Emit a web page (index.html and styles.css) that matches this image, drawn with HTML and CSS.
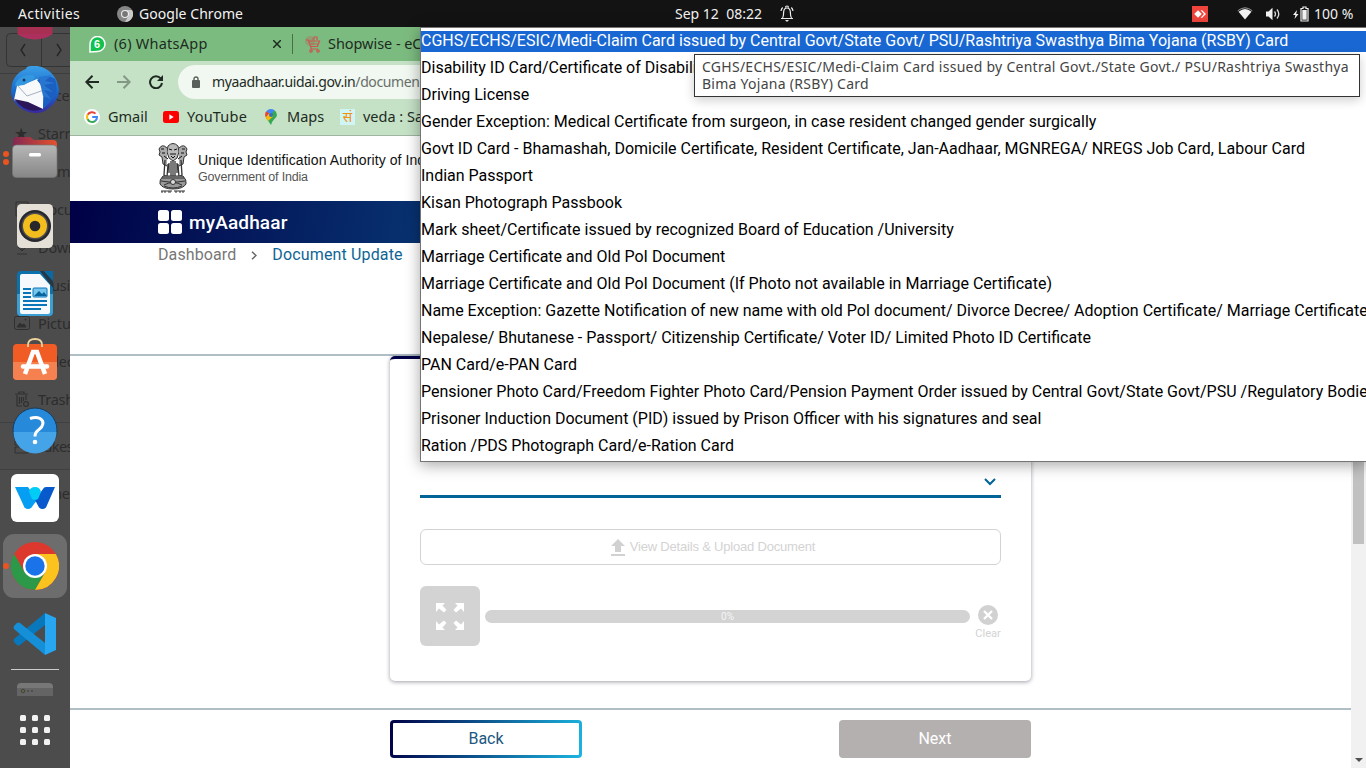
FILE: index.html
```html
<!DOCTYPE html>
<html lang="en">
<head>
<meta charset="utf-8">
<title>myAadhaar - Document Update</title>
<link rel="stylesheet" href="styles.css">
</head>
<body>
<header class="topbar">
  <span class="t-activities">Activities</span>
  <svg class="t-app-icon" width="16" height="16" viewBox="0 0 16 16"><circle cx="8" cy="8" r="8" fill="#858585"/><path d="M8 4h7A8 8 0 0 1 8 16l3.500-6Z" fill="#c9c9c9"/><circle cx="8" cy="8" r="4" fill="#eee"/><circle cx="8" cy="8" r="2.900" fill="#777"/></svg>
  <span class="t-app">Google Chrome</span>
  <span class="t-clock">Sep 12&nbsp; 08:22</span>
  <svg class="t-bell" width="14" height="17" viewBox="0 0 14 17" fill="none" stroke="#eee" stroke-width="1.200"><path d="M1 13.500h12M2.500 13c1.500-2 .8-4 1.200-6.500C4 4 5 3 7 3s3 1 3.300 3.500c.4 2.500-.3 4.500 1.200 6.500M5.500 2.500a1.500 1.500 0 0 1 3 0M1 6c.2-1.500.8-2.500 1.700-3.500M13 6c-.2-1.500-.8-2.500-1.700-3.500"/><path d="M5 15h4l-2 2z" fill="#eee" stroke="none"/></svg>
  <svg class="t-anydesk" width="16" height="16" viewBox="0 0 16 16"><path fill="#ef443b" d="M0 0h16v16H0z"/><path fill="#fff" d="m6 4.200 3.800 3.800L6 11.800 2.200 8zM8.500 4.200h1.700L14 8l-3.800 3.800H8.500L12 8z"/></svg>
  <svg class="t-wifi" width="16" height="13" viewBox="0 0 16 13"><path d="M1.500 4.800Q8-1 14.500 4.800L8 12.500Z" fill="#f2f2f2"/><path d="M.7 3.800Q8-2.200 15.300 3.800" fill="none" stroke="#999"/></svg>
  <svg class="t-sound" width="16" height="14" viewBox="0 0 16 14"><path d="M1 4.500h2.500L7.500.8v12.400L3.500 9.500H1z" fill="#f2f2f2"/><path d="M9.500 4.500q2 2.500 0 5M12 2.500q3.600 4.500 0 9" fill="none" stroke="#ddd" stroke-width="1.300"/></svg>
  <svg class="t-battery" width="16" height="16" viewBox="0 0 16 16"><path d="m4 4-4 5h2.400L1.500 13l4-5H3.200z" fill="#f2f2f2"/><path d="M10 1h3v1.500h2V15H8V2.500h2z" fill="none" stroke="#f2f2f2" stroke-width="1.200"/><path d="M9.300 4h4.400v9.700H9.300z" fill="#f2f2f2"/></svg>
  <span class="t-percent">100 %</span>
</header>
<div class="desktop">
  <aside class="dock">
    <div class="ghost">
      <svg class="ghost-nav" width="64" height="34" fill="none" stroke="#343434"><rect x=".5" y=".5" width="72" height="33" rx="4"/><path d="M35.500 0v34"/><path d="m19 11-4 6 4 6M51 11l4 6-4 6" stroke="#252525" stroke-width="1.400"/></svg>
      <ul class="ghost-list">
        <li><i></i>Recent</li>
        <li><i>★</i>Starred</li>
        <li><i></i>Home</li>
        <li><i><svg width="16" height="16" fill="none" stroke="#303030"><path d="M2 1h12v14H2z"/></svg></i>Documents</li>
        <li><i><svg width="16" height="16" fill="none" stroke="#303030"><path d="M8 1v10M4 8l4 4 4-4M3 15h10"/></svg></i>Downloads</li>
        <li><i></i>Music</li>
        <li><i><svg width="16" height="14" fill="none" stroke="#303030"><rect x=".5" y=".5" width="15" height="13" rx="2"/><path d="m3 11 3-4 2 2 2-1 2 3zM11 3h1v1h-1z" fill="#303030"/></svg></i>Pictures</li>
        <li><i></i>Videos</li>
        <li><i><svg width="16" height="16" fill="none" stroke="#303030" stroke-width="1.200"><path d="M1 3h13M3 4v11h5M12 4v5M5 3V1h5v2M5.500 6v7M7.500 6v6M9.500 6v4"/><circle cx="12" cy="13" r="2.400"/></svg></i>Trash</li>
        <li class="ghost-disk"><i><svg width="16" height="16" fill="none" stroke="#303030"><path d="M1 1h13v6H1zM1 9h13v6H1z"/></svg></i>Takes</li>
        <li class="ghost-disk"><i></i>Other</li>
      </ul>
    </div>
    <nav class="launcher">
      <svg class="peek" width="48" height="16" viewBox="0 0 48 16"><path d="M6.500 7a22 14 0 0 0 35 0Z" fill="#ad2f5d"/><path d="M6.500 0h35v7h-35Z" fill="#a72f52"/></svg>
      <svg class="app" viewBox="0 0 48 48"><defs><linearGradient id="tb" x2="0" y2="1"><stop stop-color="#3ba0e8"/><stop offset=".55" stop-color="#1769ca"/><stop offset="1" stop-color="#3929a0"/></linearGradient></defs><path d="M1 18C4 8 10 5 15 3c0-2 2-3 5-3 14-2 27 9 28 24 0 7-4 14-10 18-3 3-8 5-14 5C10 46 0 36 0 25Z" fill="url(#tb)"/><path d="M3 34 6 20l8-2 12-5 7 3-1 27q-15-1-29-9Z" fill="#f8f9fb"/><path d="m6 19 10 11 17-6" fill="none" stroke="#a6b0bd"/><path d="m3 33 14 3 15 7q-17 6-29-10Z" fill="#2b165a"/><path d="M4 20Q6 10 17 9q8-1 6 4l-10 6Z" fill="#3398df"/><path d="M26 14Q38 8 44 13q3 6 0 18L32 43l1-20Z" fill="#1c5fc2"/><path d="m28 11 13-2-7 6 10 2-11 2 9 7-9-2 7 9-8-3-3-13Z" fill="#2776cf"/><circle cx="13" cy="14" r="1.500" fill="#163964"/></svg>
      <svg class="app" viewBox="0 0 48 48"><defs><linearGradient id="fd"><stop stop-color="#832853"/><stop offset="1" stop-color="#e6512b"/></linearGradient><linearGradient id="fg" x2="0" y2="1"><stop stop-color="#b7b7b7"/><stop offset="1" stop-color="#868686"/></linearGradient></defs><path d="M2 7q0-4 4-4h13l4 3h19q4 0 4 4v27H2Z" fill="url(#fd)"/><rect x="1.500" y="11" width="44.500" height="32.500" rx="4" fill="url(#fg)" stroke="#777" stroke-width=".7"/><rect x="18" y="19" width="12" height="3.500" rx="1.500" fill="#fff"/></svg>
      <svg class="app" viewBox="0 0 48 48"><rect x="6" y="2" width="36" height="44" rx="4.500" fill="#e5e0d7"/><circle cx="24" cy="24" r="16" fill="#27272d"/><circle cx="24" cy="24" r="13.500" fill="#4b4b50"/><circle cx="24" cy="24" r="12" fill="#f3bd1e"/><circle cx="24" cy="24" r="5.300" fill="#28282c"/></svg>
      <svg class="app" viewBox="0 0 48 48"><path d="M10 1h32v41q0 4-4 4H10q-4 0-4-4V5q0-4 4-4Z" fill="#0c70aa"/><path d="M6 24h36v18q0 4-4 4H10q-4 0-4-4Z" fill="#3b9fd4"/><path d="M11 4h18l10 11v27q0 2-2 2H11q-2 0-2-2V6q0-2 2-2Z" fill="#f5f9fb"/><path d="M29 1h4l9 10v7Z" fill="#243744"/><path d="M33 1h9v10Z" fill="#0b68a2"/><path d="M12 19h8m-8 4h8m-8 4h8m-8 4h24m-24 4h24m-24 4h18" stroke="#0876b9" stroke-width="1.800"/><rect x="22" y="18" width="14" height="9" rx="1" fill="#75c5ed" stroke="#0876b9"/><path d="m23 26 5-5 3 3 2-2 3 4Z" fill="#07639b"/></svg>
      <svg class="app" viewBox="0 0 48 48"><rect x="2" y="6" width="44" height="36" rx="4" fill="#f15c25"/><path d="M2 24h44v14q0 4-4 4H6q-4 0-4-4Z" fill="#f58151"/><path d="m14 36 8-22h4l8 22" fill="none" stroke="#fff" stroke-width="4.500"/><path d="M12 28.500h24" stroke="#fff" stroke-width="4.500" stroke-linecap="round"/><path d="M17 9V7q0-6 7-6t7 6v2" fill="none" stroke="#f0d29e" stroke-width="1.800"/></svg>
      <svg class="app help" viewBox="0 0 48 48"><circle cx="24" cy="24" r="22" fill="#2789da" stroke="#173b59"/><path d="M2.500 26h43a21.500 21.500 0 0 1-43 0Z" fill="#45a3e7"/><path d="M19 12.500q6-2 10 0c5 3 3 8-1 11-3 2-4 4-4 7" fill="none" stroke="#fff" stroke-width="3"/><circle cx="24" cy="36" r="2.300" fill="#fff"/></svg>
      <svg class="app" viewBox="0 0 48 48"><rect width="48" height="48" rx="6" fill="#fff"/><path d="M4 13h13l9 13-5.500 7.500q-3.500 3-7 0Z" fill="#059ef2"/><path d="M44 13h-9q-2 0-3 2l-8 11 4 7.500q3.500 3 7 0Z" fill="#0759cc"/><path d="M18 18q1-5 6-5t6 5l-3 7q-3 2-6 0Z" fill="#00ccf5"/></svg>
      <div class="active-app"><svg class="app" viewBox="0 0 48 48"><circle cx="24" cy="24" r="24" fill="#dc382e"/><path d="M3.200 12A24 24 0 0 0 24 48l10.400-18H13.600Z" fill="#2b9947"/><path d="M44.800 12A24 24 0 0 1 24 48l10.400-18L24 12Z" fill="#fcc21d"/><circle cx="24" cy="24" r="12" fill="#fff"/><circle cx="24" cy="24" r="9.700" fill="#1a73e8"/></svg></div>
      <svg class="app" viewBox="0 0 48 48"><path d="M34 3v12L9 35q-2 1-3 0l-3-3q-1-2 0-3Z" fill="#0877bc"/><path d="M34 45V33L9 13q-2-1-3 0l-3 3q-1 2 0 3Z" fill="#158fd7"/><path d="m34 3 11 5v32l-11 5Z" fill="#27a7f2"/></svg>
      <div class="dock-rule"></div>
      <svg class="drive" width="36" height="13"><path d="M0 13V4q0-4 4-4h28q4 0 4 4v9Z" fill="#777"/><path d="M0 5h36v8H0Z" fill="#646464"/><circle cx="6" cy="8" r="1.800" fill="#66663c" stroke="#424242"/><circle cx="11" cy="8" r="1" fill="#484848"/><circle cx="15" cy="8" r="1" fill="#484848"/></svg>
      <div class="grid-icon"><b></b><b></b><b></b><b></b><b></b><b></b><b></b><b></b><b></b></div>
    </nav>
    <i class="dot d1"></i><i class="dot d2"></i><i class="dot d3"></i>
  </aside>
  <main class="browser">
    <div class="tabs">
      <svg width="17" height="17" viewBox="0 0 17 17"><path d="M1 16V8a7.500 7.500 0 1 1 7.500 7.500Z" fill="#12c24e" stroke="#fff" stroke-width="1.500"/></svg><span class="wa-count">6</span>
      <span class="tab-title wa-title">(6) WhatsApp</span>
      <svg class="tab-close" width="8" height="8"><path d="m0 0 8 8M8 0 0 8" stroke="#1c2c1d" stroke-width="1.500"/></svg>
      <i class="tab-sep"></i>
      <svg class="cart" width="16" height="17" fill="none" stroke="#cc5551" stroke-width="1.200"><circle cx="5" cy="5" r="5" fill="#b36a5b" opacity=".35" stroke="none"/><path d="M1 4h2.500l2 6.500h7L14.500 5H4M6 8h7.500M6 10.500V13h7M7 3h2V1h3v3"/><circle cx="6" cy="15" r="1.200"/><circle cx="13" cy="15" r="1.200"/></svg>
      <span class="tab-title shop-title">Shopwise - eC</span>
    </div>
    <div class="toolbar">
      <svg class="nav-back" width="14" height="14" fill="none" stroke="#1f2b22" stroke-width="2"><path d="M14 7H1.500M7.500.8 1.300 7l6.200 6.200"/></svg>
      <svg class="nav-fwd" width="14" height="14" fill="none" stroke="#839785" stroke-width="2"><path d="M0 7h12.500M6.500.8 12.700 7l-6.200 6.200"/></svg>
      <svg class="nav-reload" width="14" height="14" fill="none" stroke="#1f2b22" stroke-width="2"><path d="M11.800 3.500A6 6 0 1 0 13 8"/><path d="M14 0v6H8Z" fill="#1f2b22" stroke="none"/></svg>
      <div class="omnibox">
        <svg width="8" height="12"><path d="M2 5V3a2 2 0 0 1 4 0v2" fill="none" stroke="#59605b" stroke-width="1.400"/><rect y="4" width="8" height="8" rx="1" fill="#59605b"/></svg>
        <span class="url">myaadhaar.uidai.gov.in<em>/documen</em></span>
      </div>
    </div>
    <div class="bookmarks">
      <svg width="16" height="16" viewBox="0 0 16 16"><circle cx="8" cy="8" r="8" fill="#fff"/><g fill="none" stroke-width="2"><path d="M11.500 4.600A5 5 0 0 0 3.600 5.800" stroke="#ea4335"/><path d="M3.600 5.600a5 5 0 0 0 0 4.800" stroke="#fbbc05"/><path d="M3.600 10.200a5 5 0 0 0 7.800 1.500" stroke="#34a853"/><path d="M8.200 8H13q0 2.500-1.700 3.800" stroke="#4285f4"/></g></svg>
      <span class="bm gmail">Gmail</span>
      <svg width="16" height="12"><rect width="16" height="12" rx="2.500" fill="#f00"/><path d="m6.300 3.300 4.400 2.700-4.400 2.700Z" fill="#fff"/></svg>
      <span class="bm yt">YouTube</span>
      <svg width="12" height="16" viewBox="0 0 12 16"><path d="M.8 8.500 6 16q.5-3 3-5.500Q12 8 12 6 12 3 9.500 1.200Z" fill="#34a853"/><path d="M1.300 2.300Q-.8 5 .8 8.500L5 4Z" fill="#ea4335"/><path d="M1.300 2.300Q5-1.500 9.500 1.200L5.500 6Z" fill="#4285f4"/><path d="M.8 8.500 4.500 4 8 7.500 3 12Z" fill="#fbbc04"/><circle cx="6" cy="6" r="2" fill="#356fc0"/></svg>
      <span class="bm maps">Maps</span>
      <span class="veda-icon">सं</span>
      <span class="bm veda">veda : Sa</span>
    </div>
    <div class="page">
      <div class="viewport">
        <div class="gov">
          <svg width="30" height="51" viewBox="0 0 30 51" fill="none" stroke="#333" stroke-width="1"><path d="M10 3q5-5 10 0l1 6-2 6-4 3-4-3-2-6Z" fill="#bbb"/><path d="M9 5Q4 0 1 6l1 3-1 3 3 2 1 7 4 2M21 5q5-5 8 1l-1 3 1 3-3 2-1 7-4 2" fill="#aaa"/><path d="m11 6 3 1m2 0 3-1m-7 5h6m-5 2 2 2 2-2M3 6h3m18 0h3M4 10h3m16 0h3M6 13l4 3m14-3-4 3" stroke="#111"/><path d="m7 17-1 15 3 2 1-13m3-3v16m4-16v16m3-13 1 13 3-2-1-15M15 18v15M11 20v10M19 20v10" stroke-width="1.300"/><path d="M5 33h20q4 4 3 8-3 5-13 5T2 41q-1-4 3-8Z" fill="#999"/><path d="M4 35h22M3 38q12 3 24 0M6 42q9-5 18 0M6 43q9 4 18 0"/><circle cx="15" cy="39" r="2.500" fill="#ddd"/><path d="M3 48h11m2 0h11M4 48v2m3-2v2m3-1h3m5-1v2m4-2v2m3-2v2"/></svg>
          <div><div class="gov-name">Unique Identification Authority of Ind</div><div class="gov-sub">Government of India</div></div>
        </div>
        <div class="brand"><div class="brand-grid"><b></b><b></b><b></b><b></b></div><strong>myAadhaar</strong></div>
        <div class="crumbs"><span>Dashboard</span><svg width="6" height="9" fill="none" stroke="#666" stroke-width="1.500"><path d="m1 .8 4 3.700-4 3.700"/></svg><a>Document Update</a></div>
        <section class="content">
          <div class="card">
            <div class="select"><svg width="12" height="8" fill="none" stroke="#006496" stroke-width="2"><path d="m1 1 5 5 5-5"/></svg></div>
            <div class="upload"><svg width="14" height="17"><path d="m7 0 7 7h-4v6H4V7H0ZM0 15h14v2H0Z" fill="#d1d1d1"/></svg><span>View Details &amp; Upload Document</span></div>
            <div class="progress-row">
              <div class="expand"><svg width="28" height="27" viewBox="0 0 28 27" fill="#fff"><path d="M0 0h9L6.500 2.500 10.500 7 8 9.500 3 5.500 0 9Z"/><path d="M28 0h-9l2.500 2.500-4 4.500L20 9.500l5-4L28 9ZM0 27h9l-2.500-2.500 4-4.500L8 17.500l-5 4L0 18ZM28 27h-9l2.500-2.500-4-4.500 2.500-2.500 5 4 3-3.500Z"/></svg></div>
              <div class="progress">0%</div>
              <div class="clear"><svg width="20" height="20"><circle cx="10" cy="10" r="10" fill="#d1d1d1"/><path d="m6 6 8 8m0-8-8 8" stroke="#fff" stroke-width="2.300"/></svg><span>Clear</span></div>
            </div>
          </div>
        </section>
        <footer class="actions"><button class="back">Back</button><button class="next">Next</button></footer>
      </div>
      <div class="scroll"><div class="thumb"></div><svg width="8" height="4"><path d="M0 0h8L4 4Z" fill="#505050"/></svg></div>
    </div>
  </main>
</div>
<ul class="options">
  <li class="selected"><span>CGHS/ECHS/ESIC/Medi-Claim Card issued by Central Govt/State Govt/ PSU/Rashtriya Swasthya Bima Yojana (RSBY) Card</span></li>
  <li>Disability ID Card/Certificate of Disabili</li>
  <li>Driving License</li>
  <li>Gender Exception: Medical Certificate from surgeon, in case resident changed gender surgically</li>
  <li>Govt ID Card - Bhamashah, Domicile Certificate, Resident Certificate, Jan-Aadhaar, MGNREGA/ NREGS Job Card, Labour Card</li>
  <li>Indian Passport</li>
  <li>Kisan Photograph Passbook</li>
  <li>Mark sheet/Certificate issued by recognized Board of Education /University</li>
  <li>Marriage Certificate and Old PoI Document</li>
  <li>Marriage Certificate and Old PoI Document (If Photo not available in Marriage Certificate)</li>
  <li>Name Exception: Gazette Notification of new name with old PoI document/ Divorce Decree/ Adoption Certificate/ Marriage Certificate</li>
  <li>Nepalese/ Bhutanese - Passport/ Citizenship Certificate/ Voter ID/ Limited Photo ID Certificate</li>
  <li>PAN Card/e-PAN Card</li>
  <li>Pensioner Photo Card/Freedom Fighter Photo Card/Pension Payment Order issued by Central Govt/State Govt/PSU /Regulatory Bodies</li>
  <li>Prisoner Induction Document (PID) issued by Prison Officer with his signatures and seal</li>
  <li>Ration /PDS Photograph Card/e-Ration Card</li>
</ul>
<div class="tooltip"><div class="tip1">CGHS/ECHS/ESIC/Medi-Claim Card issued by Central Govt./State Govt./ PSU/Rashtriya Swasthya</div><div class="tip2">Bima Yojana (RSBY) Card</div></div>
</body>
</html>
```
FILE: styles.css
```css
* { box-sizing: border-box; }
html, body { margin: 0; width: 1366px; height: 768px; overflow: hidden; }
body { position: relative; font-family: Roboto, "Liberation Sans", sans-serif; font-size: 16px; background: #fff; }
svg { display: block; flex: none; }
ul { list-style: none; margin: 0; padding: 0; }
i, em { font-style: normal; }

.topbar { display: flex; align-items: center; height: 27px; background: #131313; color: #f2f2f2; font: 14px "Noto Sans", sans-serif; white-space: nowrap; padding-left: 18px; }
.topbar span { padding-bottom: 1px; }
.t-activities { width: 99px; letter-spacing: .38px; }
.t-app { margin-left: 6px; width: 536px; letter-spacing: .05px; }
.t-clock { width: 105px; }
.t-bell { margin-right: 398px; }
.t-anydesk { margin-right: 29px; }
.t-wifi { margin-right: 12px; }
.t-sound { margin-right: 12px; }
.topbar .t-percent { margin-left: 5px; padding-bottom: 0; }

.desktop { display: grid; grid-template-columns: 70px 1fr; height: 741px; }
.dock { position: relative; background: #4c4c4c; overflow: hidden; }
.ghost { position: absolute; inset: 0; color: #2d2d2d; font: 14.500px "Noto Sans", sans-serif; }
.ghost-nav { margin: 6px 0 0 6px; }
.ghost-list { border-top: 1px solid #3d3d3d; margin-top: 6px; padding-top: 2px; }
.ghost-list li { display: flex; align-items: center; height: 38px; padding-left: 14px; white-space: nowrap; letter-spacing: -.2px; }
.ghost-list i { width: 24px; font-size: 16px; flex: none; }
.ghost-list .ghost-disk { height: 47px; border-top: 1px solid #404040; letter-spacing: -.6px; }
.ghost-list li:nth-child(10) { margin-top: 4px; }
.launcher { position: absolute; inset: 0; display: flex; flex-direction: column; align-items: center; }
.app { width: 48px; height: 48px; margin-bottom: 20px; }
.peek { margin-bottom: 23px; }
.active-app { width: 64px; height: 64px; margin: -8px 0 12px; padding: 8px; border-radius: 11px; background: #6d6d6d; }
.active-app .app { margin: 0; }
.dock-rule { width: 48px; height: 1px; margin-top: -9px; background: #ccc; flex: none; }
.drive { margin: 13px 0 19px; }
.grid-icon { display: grid; grid-template-columns: repeat(3, 6px); grid-auto-rows: 6px; gap: 6px; }
.grid-icon b { background: #f2f2f2; border-radius: 1.500px; }
.dot { position: absolute; left: 3px; width: 6px; height: 6px; border-radius: 50%; background: #e95420; }
.d1 { top: 124px; }
.d2 { top: 132px; }
.d3 { top: 536px; }

.browser { display: flex; flex-direction: column; overflow: hidden; }
.tabs, .toolbar, .bookmarks { display: flex; align-items: center; white-space: nowrap; font: 14.500px "Noto Sans", sans-serif; color: #1d2b1f; }
.tabs { position: relative; height: 34px; background: #7cbb7f; padding-left: 19px; }
.wa-count { width: 0; text-indent: -12px; font: bold 11px "Liberation Sans", sans-serif; color: #fff; }
.tab-title { padding-bottom: 2px; }
.wa-title { margin-left: 8px; width: 159px; letter-spacing: .25px; }
.tab-sep { width: 1px; height: 20px; margin: 0 12px 0 11px; background: #47704a; }
.shop-title { margin-left: 7px; letter-spacing: -.05px; }
.toolbar { height: 41px; background: #c5e1c6; padding-left: 15px; }
.nav-fwd { margin-left: 18px; }
.nav-reload { margin-left: 18px; }
.omnibox { display: flex; align-items: center; height: 34px; flex: 1; margin-left: 15px; padding-left: 14px; border-radius: 17px 0 0 17px; background: #f1f7f1; }
.url { margin-left: 12px; font-size: 14px; letter-spacing: -.38px; padding-bottom: 1px; }
.url em { color: #697069; }
.bookmarks { height: 34px; padding: 0 0 4px 14px; background: #c5e1c6; border-bottom: 1px solid #a0b4a2; }
.bm { margin-left: 8px; padding-bottom: 2px; }
.gmail { width: 55px; }
.yt { width: 78px; letter-spacing: .2px; }
.maps { margin-left: 10px; width: 53px; }
.veda-icon { width: 15px; height: 16px; background: #cff5f5; color: #f19215; font: 14px/16px "Noto Sans", sans-serif; overflow: hidden; text-align: center; }

.page { display: flex; flex: 1; }
.viewport { width: 1281px; display: flex; flex-direction: column; }
.gov { display: flex; height: 65px; padding: 7px 0 0 88px; gap: 10px; font-family: "Liberation Sans", sans-serif; white-space: nowrap; }
.gov-name { margin-top: 9px; font-size: 14px; line-height: 16px; color: #111; letter-spacing: .08px; }
.gov-sub { font-size: 12.500px; line-height: 18px; color: #555; letter-spacing: -.18px; }
.brand { display: flex; align-items: center; height: 42px; padding-left: 88px; background: linear-gradient(100deg, #000046, #1cb5e0); color: #fff; font-size: 19px; }
.brand strong { font-weight: 500; margin-left: 7px; letter-spacing: .15px; }
.brand-grid { display: grid; grid-template-columns: 11px 11px; grid-auto-rows: 11px; gap: 2px; }
.brand-grid b { background: #fff; border-radius: 2.500px; }
.crumbs { display: flex; align-items: center; height: 23px; padding-left: 88px; color: #777; letter-spacing: .1px; }
.crumbs svg { margin: 1px 15px 0; }
.crumbs a { color: #0e6595; letter-spacing: .15px; }
.content { margin-top: 88px; height: 356px; border-top: 2px solid #b0bec5; border-bottom: 2px solid #b0bec5; }
.card { width: 641px; height: 325px; margin-left: 320px; padding: 104px 30px 0; border-top: 3px solid #000046; border-radius: 5px; box-shadow: 0 1px 4px rgba(10, 10, 40, .4); }
.select { display: flex; justify-content: flex-end; height: 35px; padding: 15px 5px 0; border-bottom: 3px solid #006496; }
.upload { display: flex; align-items: center; justify-content: center; gap: 5px; height: 36px; margin-top: 31px; padding-left: 5px; border: 1px solid #d3d3d3; border-radius: 6px; color: #d3d3d3; font: 13px "Liberation Sans", sans-serif; letter-spacing: -.19px; }
.upload span { padding-bottom: 2px; }
.progress-row { display: flex; align-items: center; margin-top: 21px; }
.expand { display: grid; place-items: center; width: 60px; height: 60px; border-radius: 6px; background: #d3d3d3; }
.progress { width: 485px; height: 13px; margin-left: 5px; border-radius: 6.500px; background: #d3d3d3; color: #f5f5f5; font-size: 10px; line-height: 13px; text-align: center; }
.clear { display: flex; flex-direction: column; align-items: center; gap: 1px; margin: 14px 0 0 5px; width: 26px; color: #d3d3d3; font-size: 11px; line-height: 16px; }
.actions { display: flex; justify-content: space-between; width: 641px; margin: 10px 0 0 320px; }
.actions button { width: 192px; height: 38px; border-radius: 4px; font: 16px Roboto, sans-serif; }
.back { border: 3px solid transparent; padding: 0 0 2px; color: #22577f; background: linear-gradient(#fff, #fff) padding-box, linear-gradient(100deg, #000046, #1cb5e0) border-box; }
.next { border: 0; padding: 0 0 2px; background: #b5b0b0; color: #fff; }
.scroll { display: flex; flex-direction: column; align-items: center; justify-content: space-between; width: 15px; padding-bottom: 6px; background: #f1f1f1; }
.thumb { width: 11px; height: 408px; background: #c1c1c1; }

.options { position: absolute; left: 420px; top: 27px; width: 946px; height: 435px; overflow: hidden; border: 1px solid #757575; border-right: 0; background: #fff; color: #000; font-size: 16px; line-height: 21px; box-shadow: 0 3px 14px rgba(0, 0, 0, .35); }
.options li { height: 27px; padding: 2px 0 4px; white-space: nowrap; }
.options .selected { padding: 3px 0; color: #fff; }
.selected span { display: block; background: #1967d2; line-height: 19px; height: 21px; }
.tooltip { position: absolute; left: 694px; top: 54px; width: 666px; height: 43px; padding: 3px 7px; border: 1px solid #333; background: #fff; color: #444; font: 14px/17px "Noto Sans", sans-serif; letter-spacing: .265px; white-space: nowrap; box-shadow: 0 3px 10px rgba(0, 0, 0, .2); }
```
